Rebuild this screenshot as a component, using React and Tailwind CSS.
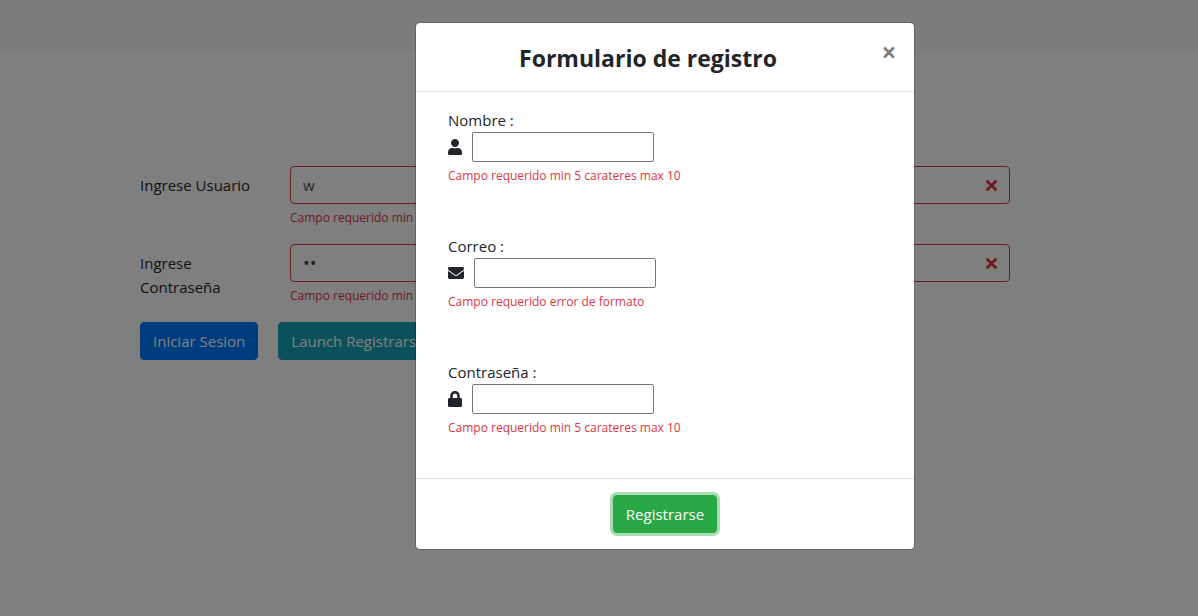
import { FaEnvelope, FaLock, FaUser } from "react-icons/fa";

function InvalidMark() {
  return (
    <svg viewBox="-2 -2 7 7" className="pointer-events-none absolute top-[10px] right-[9px] size-[19px]" fill="#dc3545" stroke="none" aria-hidden="true">
      <path stroke="#dc3545" d="M0 0l3 3m0-3L0 3" />
      <circle r=".5" />
      <circle cx="3" r=".5" />
      <circle cy="3" r=".5" />
      <circle cx="3" cy="3" r=".5" />
    </svg>
  );
}

function LoginField({ id, label, type, value }) {
  return (
    <div className="flex">
      <label htmlFor={id} className="w-[150px] shrink-0 pt-[7px] pr-[30px] leading-6">
        {label}
      </label>
      <div className="min-w-0 flex-1">
        <div className="relative">
          <input
            id={id}
            type={type}
            defaultValue={value}
            className="block h-[38px] w-full rounded border border-[#dc3545] bg-white pr-9 pl-3 text-[#495057] [&[type=password]]:text-lg"
          />
          <InvalidMark />
        </div>
        <p className="mt-1 text-xs leading-5 text-[#dc3545]">Campo requerido min 5 carateres max 10</p>
      </div>
    </div>
  );
}

function RegisterField({ id, label, type, error, icon }) {
  return (
    <div>
      <label htmlFor={id} className="block leading-6">
        {label}
      </label>
      <div className="flex items-center gap-[10px]">
        {icon}
        <input id={id} type={type} className="h-[30px] w-[182px] rounded-xs border border-[#767676] bg-white px-1" />
      </div>
      <p className="mt-1 text-xs leading-5 text-[#dc3545]">{error}</p>
    </div>
  );
}

export default function App() {
  return (
    <div className="relative min-h-screen bg-white font-['Open_Sans','Noto_Sans',sans-serif] text-[15px] text-[#212529]">
      <nav className="h-[50px] bg-[#f8f9fa]" />
      <form className="pt-[116px] pr-[188px] pl-[140px]">
        <div className="flex flex-col gap-4">
          <LoginField id="usuario" label="Ingrese Usuario" type="text" value="w" />
          <LoginField id="clave" label="Ingrese Contraseña" type="password" value="ab" />
        </div>
        <div className="mt-4 flex gap-5">
          <button type="button" className="h-[38px] rounded border border-[#007bff] bg-[#007bff] px-3 text-white">
            Iniciar Sesion
          </button>
          <button type="button" className="h-[38px] rounded border border-[#17a2b8] bg-[#17a2b8] px-3 text-white">
            Launch Registrarse
          </button>
        </div>
      </form>

      <div className="absolute inset-0 flex items-start justify-center bg-black/50 pt-[22px] pl-[132px]">
        <div role="dialog" aria-modal="true" aria-labelledby="titulo" className="w-full max-w-[500px] rounded-[5px] border border-black/20 bg-white bg-clip-padding">
          <header className="flex items-start border-b border-[#dee2e6] pt-[17px] pb-[15px] pl-4">
            <h2 id="titulo" className="flex-1 text-center text-[23px] leading-9 font-bold">
              Formulario de registro
            </h2>
            <button type="button" aria-label="Cerrar" className="w-[50px] text-[26px] leading-6 font-bold text-black opacity-50">
              ×
            </button>
          </header>
          <form className="flex flex-col gap-12 px-8 pt-4 pb-10">
            <RegisterField id="nombre" label="Nombre :" type="text" error="Campo requerido min 5 carateres max 10" icon={<FaUser className="h-4 w-[14px]" />} />
            <RegisterField id="correo" label="Correo :" type="email" error="Campo requerido error de formato" icon={<FaEnvelope className="size-4" />} />
            <RegisterField id="contrasena" label="Contraseña :" type="password" error="Campo requerido min 5 carateres max 10" icon={<FaLock className="h-4 w-[14px]" />} />
          </form>
          <footer className="flex justify-center border-t border-[#dee2e6] p-4">
            <button type="button" className="h-[38px] rounded border border-[#28a745] bg-[#28a745] px-3 text-white ring-3 ring-[#28a745]/40">
              Registrarse
            </button>
          </footer>
        </div>
      </div>
    </div>
  );
}
